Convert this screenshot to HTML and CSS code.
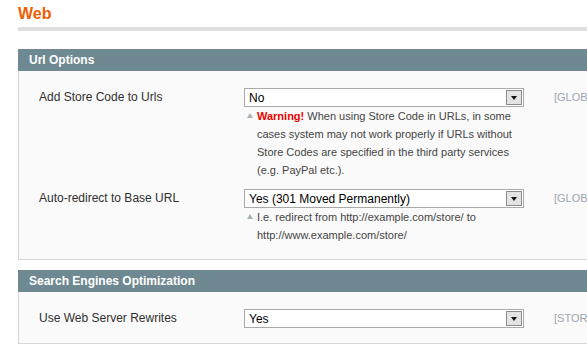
FILE: index.html
```html
<!DOCTYPE html>
<html lang="en">
<head>
    <meta charset="UTF-8">
    <title>Web</title>
    <link rel="stylesheet" href="styles.css">
</head>
<body>
    <div class="page">
        <div class="content-header">
            <h3>Web</h3>
        </div>

        <div class="section">
            <div class="section-head">Url Options</div>
            <div class="section-body">
                <div class="row">
                    <div class="label">Add Store Code to Urls</div>
                    <div class="value">
                        <div class="select"><span class="select-text">No</span><span class="select-btn"></span></div>
                        <p class="note"><strong class="warn">Warning!</strong> When using Store Code in URLs, in some cases system may not work properly if URLs without Store Codes are specified in the third party services (e.g. PayPal etc.).</p>
                    </div>
                    <div class="scope">[GLOBAL]</div>
                </div>
                <div class="row">
                    <div class="label">Auto-redirect to Base URL</div>
                    <div class="value">
                        <div class="select"><span class="select-text">Yes (301 Moved Permanently)</span><span class="select-btn"></span></div>
                        <p class="note">I.e. redirect from http://example.com/store/ to http://www.example.com/store/</p>
                    </div>
                    <div class="scope">[GLOBAL]</div>
                </div>
            </div>
        </div>

        <div class="section">
            <div class="section-head">Search Engines Optimization</div>
            <div class="section-body">
                <div class="row">
                    <div class="label">Use Web Server Rewrites</div>
                    <div class="value">
                        <div class="select"><span class="select-text">Yes</span><span class="select-btn"></span></div>
                    </div>
                    <div class="scope">[STORE VIEW]</div>
                </div>
            </div>
        </div>
    </div>
</body>
</html>
```

FILE: styles.css
```css
body {
    margin: 0;
    overflow: hidden;
    font-family: "Liberation Sans", Arial, sans-serif;
    font-size: 12px;
    color: #2f2f2f;
    background-color: #fff;
}
.page {
    width: 640px;
    padding-left: 18px;
}
.content-header {
    padding: 4px 0 3px;
    border-bottom: 4px solid #dfdfdf;
    margin-bottom: 18px;
}
.content-header h3 {
    margin: 0;
    font-size: 16px;
    line-height: 20px;
    color: #eb5e00;
}
.section {
    margin-bottom: 10px;
}
.section-head {
    height: 22px;
    line-height: 22px;
    padding: 0 11px;
    background-color: #6f8992;
    color: #fff;
    font-weight: bold;
}
.section-body {
    background-color: #fafafa;
    border: 1px solid #d6d6d6;
    border-top: none;
    padding: 17px 20px 15px;
}
.row {
    display: grid;
    grid-template-columns: 205px 280px auto;
    margin-bottom: 10px;
}
.row:last-child {
    margin-bottom: 0;
}
.label {
    line-height: 18px;
}
.select {
    box-sizing: border-box;
    height: 19px;
    border: 1px solid #aaa;
    background-color: #fff;
    display: flex;
    align-items: center;
}
.select-text {
    flex: 1;
    padding-left: 4px;
    font-size: 12px;
    color: #000;
}
.select-btn {
    position: relative;
    box-sizing: border-box;
    width: 16px;
    height: 15px;
    margin-right: 1px;
    background-color: #e3e3e3;
    border: 1px solid #8c8c8c;
}
.select-btn::after {
    content: "";
    position: absolute;
    left: 4px;
    top: 5px;
    border-left: 3px solid transparent;
    border-right: 3px solid transparent;
    border-top: 4px solid #111;
}
.note {
    position: relative;
    margin: 0;
    padding-left: 13px;
    font-size: 11px;
    line-height: 18px;
    color: #444;
}
.note::before {
    content: "";
    position: absolute;
    left: 3px;
    top: 6px;
    border-left: 3px solid transparent;
    border-right: 3px solid transparent;
    border-bottom: 5px solid #a6b1b8;
}
.warn {
    color: #e00;
}
.scope {
    margin-left: 30px;
    font-size: 11px;
    line-height: 18px;
    color: #9aa6b0;
    white-space: nowrap;
}
```
